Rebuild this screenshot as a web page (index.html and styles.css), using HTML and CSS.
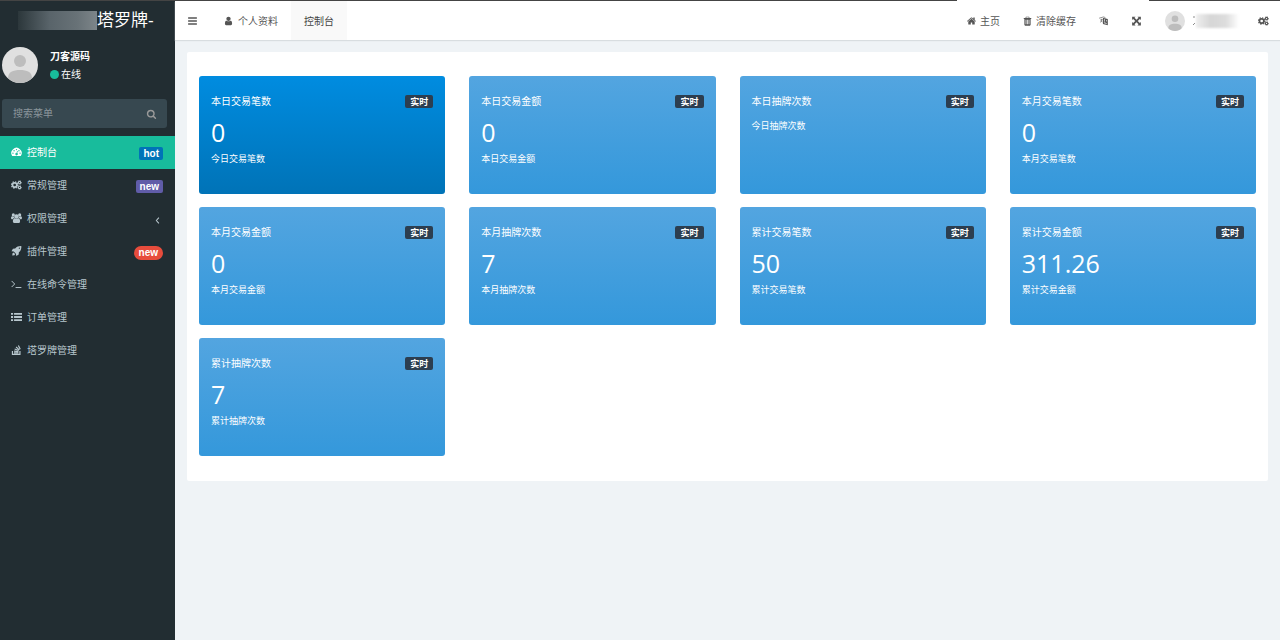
FILE: index.html
```html
<!DOCTYPE html>
<html lang="zh-CN">
<head>
<meta charset="utf-8">
<title>控制台</title>
<link rel="stylesheet" href="styles.css">
</head>
<body>
<svg class="sprite" aria-hidden="true">
  <symbol id="avatar" viewBox="0 0 36 36"><circle cx="18" cy="18" r="18" fill="#e0e0e0"/><circle cx="18" cy="14" r="6" fill="#bdbdbd"/><path d="M6 31c0-6 5-8 12-8s12 2 12 8c-3 3-7 5-12 5s-9-2-12-5z" fill="#bdbdbd"/></symbol>
  <symbol id="bars" viewBox="0 0 16 16"><path d="M1 2h14v2.400H1zM1 6.800h14v2.400H1zM1 11.600h14V14H1z"/></symbol>
  <symbol id="user" viewBox="0 0 1792 1792"><path d="M1536 1399q0 109-62.500 187t-150.500 78h-854q-88 0-150.500-78t-62.500-187q0-85 8.500-160.500t31.500-152 58.500-131 94-89 134.500-34.500q131 128 313 128t313-128q76 0 134.500 34.500t94 89 58.500 131 31.500 152 8.500 160.500zm-256-887q0 159-112.500 271.500t-271.500 112.500-271.500-112.500-112.500-271.500 112.500-271.500 271.500-112.500 271.500 112.500 112.500 271.500z"/></symbol>
  <symbol id="home" viewBox="0 0 1792 1792"><path d="M1472 992v480q0 26-19 45t-45 19h-384v-384h-256v384h-384q-26 0-45-19t-19-45v-480q0-1 .5-3t.5-3l575-474 575 474q1 2 1 6zm223-69l-62 74q-8 9-21 11h-3q-13 0-21-7l-692-577-692 577q-12 8-24 7-13-2-21-11l-62-74q-8-10-7-23.500t11-21.500l719-599q32-26 76-26t76 26l244 204v-195q0-14 9-23t23-9h192q14 0 23 9t9 23v408l219 182q10 8 11 21.500t-7 23.500z"/></symbol>
  <symbol id="search" viewBox="0 0 1792 1792"><path d="M1216 832q0-185-131.500-316.500t-316.500-131.500-316.500 131.500-131.500 316.500 131.500 316.500 316.500 131.500 316.500-131.500 131.500-316.500zm512 832q0 52-38 90t-90 38q-54 0-90-38l-343-342q-179 124-399 124-143 0-273.500-55.500t-225-150-150-225-55.500-273.500 55.500-273.500 150-225 225-150 273.500-55.500 273.500 55.500 225 150 150 225 55.500 273.500q0 220-124 399l343 343q37 37 37 90z"/></symbol>
  <symbol id="trash" viewBox="0 0 16 16"><path fill-rule="evenodd" d="M5.500 1h5l.8 2H14v1.800h-1V14l-1 1.500H4L3 14V4.800H2V3h2.700zM6.300 2l-.4 1h4.200l-.4-1zM5 6v7h1.200V6zm2.400 0v7h1.200V6zm2.400 0v7H11V6z"/></symbol>
  <symbol id="language" viewBox="0 0 16 16"><path fill="none" stroke="currentColor" d="M1 3.500 8 1.500l3 1M3 6h4M5 4.500V6c0 2-1 3.500-2.500 4.500M3.500 7.500 6.500 9.500"/><path fill="none" stroke="currentColor" stroke-width="1.800" d="m8 4 6 1.500v8L8 12zM10 10.500l1-4 1.500 4.500"/></symbol>
  <symbol id="arrows" viewBox="0 0 16 16"><path d="M1 1h5.500L4.800 2.700 8 6l3.200-3.300L9.500 1H15v5.500l-1.700-1.700L10 8l3.300 3.200L15 9.500V15H9.500l1.700-1.700L8 10l-3.200 3.300L6.500 15H1V9.500l1.700 1.700L6 8 2.700 4.800 1 6.500z"/></symbol>
  <symbol id="cogs" viewBox="0 0 18 16"><g fill="none" stroke="currentColor"><circle cx="6" cy="8" r="3.600" stroke-width="2.800"/><circle cx="6" cy="8" r="5.200" stroke-width="2" stroke-dasharray="2.040 2.040"/><circle cx="14" cy="4" r="1.900" stroke-width="1.800"/><circle cx="14" cy="4" r="3" stroke-width="1.300" stroke-dasharray="1.350 1.350"/><circle cx="14" cy="12" r="1.900" stroke-width="1.800"/><circle cx="14" cy="12" r="3" stroke-width="1.300" stroke-dasharray="1.350 1.350"/></g></symbol>
  <symbol id="gauge" viewBox="0 0 18 16"><path fill-rule="evenodd" d="M2 14.500A8.500 8.500 0 1 1 16 14.500zM3.200 8.800a1.100 1.100 0 1 0 0 2.200 1.100 1.100 0 0 0 0-2.200zM5 4.800A1.100 1.100 0 1 0 5 7a1.100 1.100 0 0 0 0-2.200zM9 3a1.100 1.100 0 1 0 0 2.200A1.100 1.100 0 0 0 9 3zm4 1.800A1.100 1.100 0 1 0 13 7a1.100 1.100 0 0 0 0-2.200zm1.800 4a1.100 1.100 0 1 0 0 2.200 1.100 1.100 0 0 0 0-2.200zM10 6.200l-1 3.300a2 2 0 1 0 1.200.3l1-3.300z"/></symbol>
  <symbol id="group" viewBox="0 0 18 16"><circle cx="9" cy="5.500" r="3.600"/><circle cx="3.800" cy="3" r="2.600"/><circle cx="14.200" cy="3" r="2.600"/><path d="M3.500 15c-1-2 0-6.500 2.700-6.500 1.600 1.200 4 1.200 5.600 0 2.700 0 3.700 4.500 2.700 6.500l-1 1h-9zM0 8.500C0 6.500.7 5.200 2 5.200c1 .8 2 .8 3 .6 0 1 .3 1.700.8 2.300-1.500 0-2.300.7-2.800 1.900H1zM18 8.500c0-2-.7-3.300-2-3.300-1 .8-2 .8-3 .6 0 1-.3 1.700-.8 2.300 1.500 0 2.300.7 2.800 1.900h2z"/></symbol>
  <symbol id="rocket" viewBox="0 0 16 16"><path fill-rule="evenodd" d="M15.800.2c.2 4.300-1 7.200-4 9.900l-.3 3.600-3.700 2.200-.8-3.600-3.400-3.400L0 8.200l2.300-3.800 3.600-.3C8.700 1.200 11.500 0 15.800.2zM12.600 2.400a1 1 0 1 0 0 2 1 1 0 0 0 0-2zM3.200 10.300l2.600 2.600-1 1.800-3.600.5.400-3.700z"/></symbol>
  <symbol id="terminal" viewBox="0 0 18 16"><path fill="none" stroke="currentColor" stroke-width="1.600" d="m1 3 5 5-5 5M7.500 13.800H17"/></symbol>
  <symbol id="list" viewBox="0 0 18 16"><path d="M0 1.500h3.400v3H0zM5 1.500h13v3H5zM0 6.500h3.400v3H0zM5 6.500h13v3H5zM0 11.500h3.400v3H0zM5 11.500h13v3H5z"/></symbol>
  <symbol id="stack" viewBox="0 0 16 16"><path fill="none" stroke="currentColor" stroke-width="1.900" d="M1.500 9.500V15h12V9.500M4 12.700h7M4.100 9.800l7 .7M5 6.500l6.500 2.400M7.300 3.300l5.200 4.500M11 .8l3 6"/></symbol>
  <symbol id="angle" viewBox="0 0 8 16"><path fill="none" stroke="currentColor" stroke-width="1.800" d="M6.500 3 2 8l4.500 5"/></symbol>
</svg>

<div class="window-edge"><span class="window-tab"></span></div>
<div class="app">
  <aside class="sidebar">
    <a class="brand" href="#"><span class="brand-mask"></span>塔罗牌-</a>
    <div class="profile">
      <svg class="profile-avatar"><use href="#avatar"/></svg>
      <div class="profile-info">
        <strong>刀客源码</strong>
        <span class="status"><i class="status-dot"></i>在线</span>
      </div>
    </div>
    <form class="search">
      <input class="search-input" type="text" placeholder="搜索菜单" aria-label="搜索菜单">
      <button class="search-button" type="button" aria-label="搜索"><svg class="icon"><use href="#search"/></svg></button>
    </form>
    <nav class="menu">
      <a class="menu-item active" href="#"><svg class="icon"><use href="#gauge"/></svg><span>控制台</span><b class="tag tag-blue">hot</b></a>
      <a class="menu-item" href="#"><svg class="icon"><use href="#cogs"/></svg><span>常规管理</span><b class="tag tag-purple">new</b></a>
      <a class="menu-item" href="#"><svg class="icon"><use href="#group"/></svg><span>权限管理</span><svg class="menu-arrow"><use href="#angle"/></svg></a>
      <a class="menu-item" href="#"><svg class="icon"><use href="#rocket"/></svg><span>插件管理</span><b class="tag tag-red">new</b></a>
      <a class="menu-item" href="#"><svg class="icon"><use href="#terminal"/></svg><span>在线命令管理</span></a>
      <a class="menu-item" href="#"><svg class="icon"><use href="#list"/></svg><span>订单管理</span></a>
      <a class="menu-item" href="#"><svg class="icon"><use href="#stack"/></svg><span>塔罗牌管理</span></a>
    </nav>
  </aside>

  <div class="main">
    <header class="topbar">
      <button class="top-item" type="button" aria-label="切换菜单"><svg class="icon"><use href="#bars"/></svg></button>
      <a class="top-item tab" href="#"><svg class="icon"><use href="#user"/></svg>个人资料</a>
      <a class="top-item tab current" href="#">控制台</a>
      <div class="top-right">
        <a class="top-item" href="#"><svg class="icon"><use href="#home"/></svg>主页</a>
        <a class="top-item" href="#"><svg class="icon"><use href="#trash"/></svg>清除缓存</a>
        <button class="top-item" type="button" aria-label="语言"><svg class="icon"><use href="#language"/></svg></button>
        <button class="top-item" type="button" aria-label="全屏"><svg class="icon"><use href="#arrows"/></svg></button>
        <button class="top-item account" type="button" aria-label="账户"><svg class="top-avatar"><use href="#avatar"/></svg><svg class="account-edge" viewBox="0 0 3 10"><path d="M0 1h2M2 7 0 9" fill="none" stroke="#888"/></svg><span class="account-mask"></span></button>
        <button class="top-item settings" type="button" aria-label="设置"><svg class="icon"><use href="#cogs"/></svg></button>
      </div>
    </header>
    <main class="content">
      <section class="panel">
        <article class="card card-deep"><header class="card-head"><h2>本日交易笔数</h2><b class="live">实时</b></header><p class="value">0</p><p class="note">今日交易笔数</p></article>
        <article class="card"><header class="card-head"><h2>本日交易金额</h2><b class="live">实时</b></header><p class="value">0</p><p class="note">本日交易金额</p></article>
        <article class="card"><header class="card-head"><h2>本日抽牌次数</h2><b class="live">实时</b></header><p class="value"></p><p class="note">今日抽牌次数</p></article>
        <article class="card"><header class="card-head"><h2>本月交易笔数</h2><b class="live">实时</b></header><p class="value">0</p><p class="note">本月交易笔数</p></article>
        <article class="card"><header class="card-head"><h2>本月交易金额</h2><b class="live">实时</b></header><p class="value">0</p><p class="note">本月交易金额</p></article>
        <article class="card"><header class="card-head"><h2>本月抽牌次数</h2><b class="live">实时</b></header><p class="value">7</p><p class="note">本月抽牌次数</p></article>
        <article class="card"><header class="card-head"><h2>累计交易笔数</h2><b class="live">实时</b></header><p class="value">50</p><p class="note">累计交易笔数</p></article>
        <article class="card"><header class="card-head"><h2>累计交易金额</h2><b class="live">实时</b></header><p class="value">311.26</p><p class="note">累计交易金额</p></article>
        <article class="card"><header class="card-head"><h2>累计抽牌次数</h2><b class="live">实时</b></header><p class="value">7</p><p class="note">累计抽牌次数</p></article>
      </section>
    </main>
  </div>
</div>
</body>
</html>
```
FILE: styles.css
```css
* { box-sizing: border-box; }
body {
  margin: 0;
  min-height: 100vh;
  display: flex;
  flex-direction: column;
  background: #eff3f6;
  font: 10px/16px "Open Sans", "Noto Sans CJK SC", sans-serif;
}
a { color: inherit; text-decoration: none; }
button { border: 0; padding: 0; background: none; color: inherit; font: inherit; }
h2, p { margin: 0; font-size: 10px; font-weight: 400; }
.sprite { display: none; }
.icon { width: 11px; height: 10px; flex: none; fill: currentColor; }

.window-edge { display: flex; justify-content: flex-end; height: 1px; padding-right: 131px; background: #444; }
.window-tab { width: 192px; background: #fff; }
.app { flex: 1; display: flex; }

.sidebar { width: 175px; flex: none; background: #222d32; color: #b8c7ce; }
.brand { display: flex; align-items: center; height: 39px; padding-left: 18px; color: #fff; font-family: "Liberation Sans", "Noto Sans CJK SC", sans-serif; font-size: 17px; }
.brand-mask { width: 79px; height: 19px; background: linear-gradient(90deg, #2c373b, #59646a 40%, #687277 75%, #7d8589); }
.profile { display: flex; align-items: center; gap: 12px; height: 50px; padding-left: 2px; color: #fff; }
.profile-avatar { width: 36px; height: 36px; }
.profile-info { display: flex; flex-direction: column; line-height: 18px; }
.status { display: flex; align-items: center; gap: 2px; }
.status-dot { width: 9px; height: 9px; border-radius: 50%; background: #18bc9c; }
.search { display: flex; align-items: center; height: 29px; margin: 9px 8px 8px 2px; border-radius: 3px; background: #374850; color: #999; }
.search-input { flex: 1; min-width: 0; height: 100%; padding: 0 11px 2px; border: 0; outline: 0; background: none; color: #ccc; font: inherit; }
.search-input::placeholder { color: #8a959b; opacity: 1; }
.search-button { display: flex; padding-right: 10px; }
.menu-item { display: flex; align-items: center; gap: 5px; height: 33px; padding: 0 12px 2px 11px; }
.menu-item.active { background: #18bc9c; color: #fff; }
.menu-arrow { width: 5px; height: 9px; margin: 5px 3px 0 auto; fill: none; }
.tag { margin: 4px 0 0 auto; padding: 0 4px; border-radius: 2px; color: #fff; font: bold 10px/13px "Liberation Sans", sans-serif; }
.tag-red { padding: 0 5px; border-radius: 8px; line-height: 14px; background: #e74c3c; }
.tag-blue { background: #0073b7; }
.tag-purple { background: #605ca8; }

.main { flex: 1; min-width: 0; }
.topbar { display: flex; height: 39px; background: #fff; color: #555; box-shadow: 0 1px 1px #d8dde0; }
.top-item { display: flex; align-items: center; gap: 3px; padding: 0 11px; }
.top-item:first-child { padding: 0 12px; }
.tab { padding: 0 13px; gap: 4px; }
.tab.current { background: #f9f9f9; color: #444; }
.top-right { display: flex; margin-left: auto; }
.top-right .top-item:first-child { padding: 0 11px; }
.account { gap: 0; padding: 0 8px 0 12px; }
.top-avatar { width: 20px; height: 20px; margin-right: 8px; }
.account-edge { width: 3px; height: 10px; }
.account-mask { width: 43px; height: 14px; background: linear-gradient(90deg, #eee, #d6d6d6 35%, #ddd 70%, #fff); filter: blur(1px); }

.content { padding: 12px 12px 24px; }
.panel { display: grid; grid-template-columns: repeat(4, 1fr); gap: 13px 24px; padding: 24px 12px 25px; border-radius: 2px; background: #fff; }
.card { min-height: 118px; padding: 17px 12px; border-radius: 3px; background: linear-gradient(#53a5e0, #3498db); color: #fff; }
.card-deep { background: linear-gradient(#008ce0, #0073b7); }
.card-head { display: flex; align-items: center; justify-content: space-between; margin-bottom: 9px; }
.live { padding: 0 5px; border-radius: 2px; background: #2c3e50; font-size: 9px; line-height: 13px; }
.value { padding-bottom: 4px; font-size: 25px; line-height: 29px; }
.value:empty { padding: 0; }
.note { font-size: 9px; line-height: 16px; }
```
